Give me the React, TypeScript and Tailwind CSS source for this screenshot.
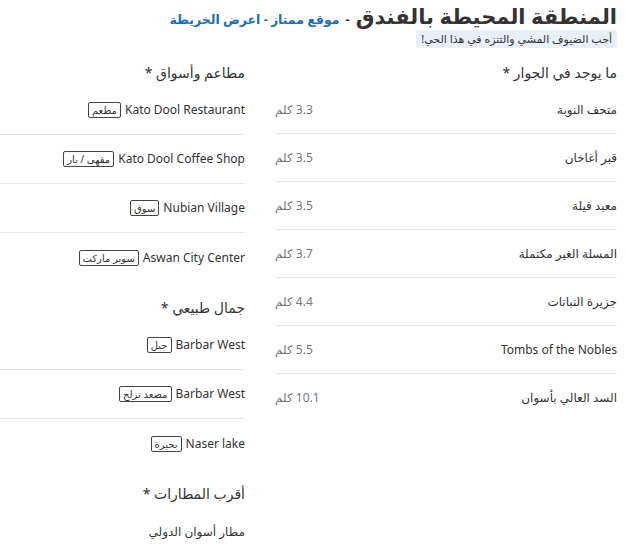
import React from 'react';

const nearby = [
  { name: 'متحف النوبة', dist: '3.3 كلم' },
  { name: 'قبر أغاخان', dist: '3.5 كلم' },
  { name: 'معبد فيلة', dist: '3.5 كلم' },
  { name: 'المسلة الغير مكتملة', dist: '3.7 كلم' },
  { name: 'جزيرة النباتات', dist: '4.4 كلم' },
  { name: 'Tombs of the Nobles', dist: '5.5 كلم' },
  { name: 'السد العالي بأسوان', dist: '10.1 كلم' },
];

const groups = [
  {
    title: 'مطاعم وأسواق',
    items: [
      { name: 'Kato Dool Restaurant', tag: 'مطعم' },
      { name: 'Kato Dool Coffee Shop', tag: 'مقهى / بار' },
      { name: 'Nubian Village', tag: 'سوق' },
      { name: 'Aswan City Center', tag: 'سوبر ماركت' },
    ],
  },
  {
    title: 'جمال طبيعي',
    items: [
      { name: 'Barbar West', tag: 'جبل' },
      { name: 'Barbar West', tag: 'مصعد تزلج' },
      { name: 'Naser lake', tag: 'بحيرة' },
    ],
  },
  {
    title: 'أقرب المطارات',
    items: [{ name: 'مطار أسوان الدولي', tag: '' }],
  },
];

function Heading({ text, first }: { text: string; first?: boolean }) {
  return (
    <div className={`flex h-[28px] items-center text-[14px] text-[#333] ${first ? '' : 'mt-[11px]'}`}>
      {text} *
    </div>
  );
}

export default function App() {
  return (
    <div
      dir="rtl"
      className="w-[628px] h-[556px] overflow-hidden bg-white pr-[11px] text-[#333]"
      style={{ fontFamily: '"Noto Sans", "DejaVu Sans", sans-serif' }}
    >
      <div className="flex items-baseline gap-[6px] pt-[1px]">
        <h2 className="text-[21px] font-bold leading-[30px] text-[#333]">المنطقة المحيطة بالفندق</h2>
        <span className="text-[13px] font-bold text-[#333]">-</span>
        <span className="text-[12.5px] font-bold text-[#1a6dc0]">موقع ممتاز - اعرض الخريطة</span>
      </div>
      <div className="mt-[-1px] flex">
        <span className="rounded-[3px] bg-[#e9eff9] px-[5px] py-[2px] text-[11px] leading-[14px] text-[#333]">
          أحب الضيوف المشي والتنزه في هذا الحي!
        </span>
      </div>

      <div className="mt-[10px] flex gap-[30px]">
        <div className="w-[342px]">
          <Heading text="ما يوجد في الجوار" first />
          {nearby.map((p, i) => (
            <div
              key={i}
              className={`flex h-[48px] items-center justify-between text-[12px] ${
                i < nearby.length - 1 ? 'border-b border-[#e6e6e6]' : ''
              }`}
            >
              <span>{p.name}</span>
              <span className="text-[#777]">{p.dist}</span>
            </div>
          ))}
        </div>

        <div className="w-[245px]">
          {groups.map((g, gi) => (
            <div key={gi}>
              <Heading text={g.title} first={gi === 0} />
              {g.items.map((it, i) => (
                <div
                  key={i}
                  className={`flex h-[49px] items-center gap-[4px] text-[12px] ${
                    i < g.items.length - 1 ? 'border-b border-[#e6e6e6]' : 'h-[48px]'
                  }`}
                >
                  <span>{it.name}</span>
                  {it.tag && (
                    <span className="rounded-[2px] border border-[#444] px-[3px] text-[10px] leading-[14px]">
                      {it.tag}
                    </span>
                  )}
                </div>
              ))}
            </div>
          ))}
        </div>
      </div>
    </div>
  );
}
